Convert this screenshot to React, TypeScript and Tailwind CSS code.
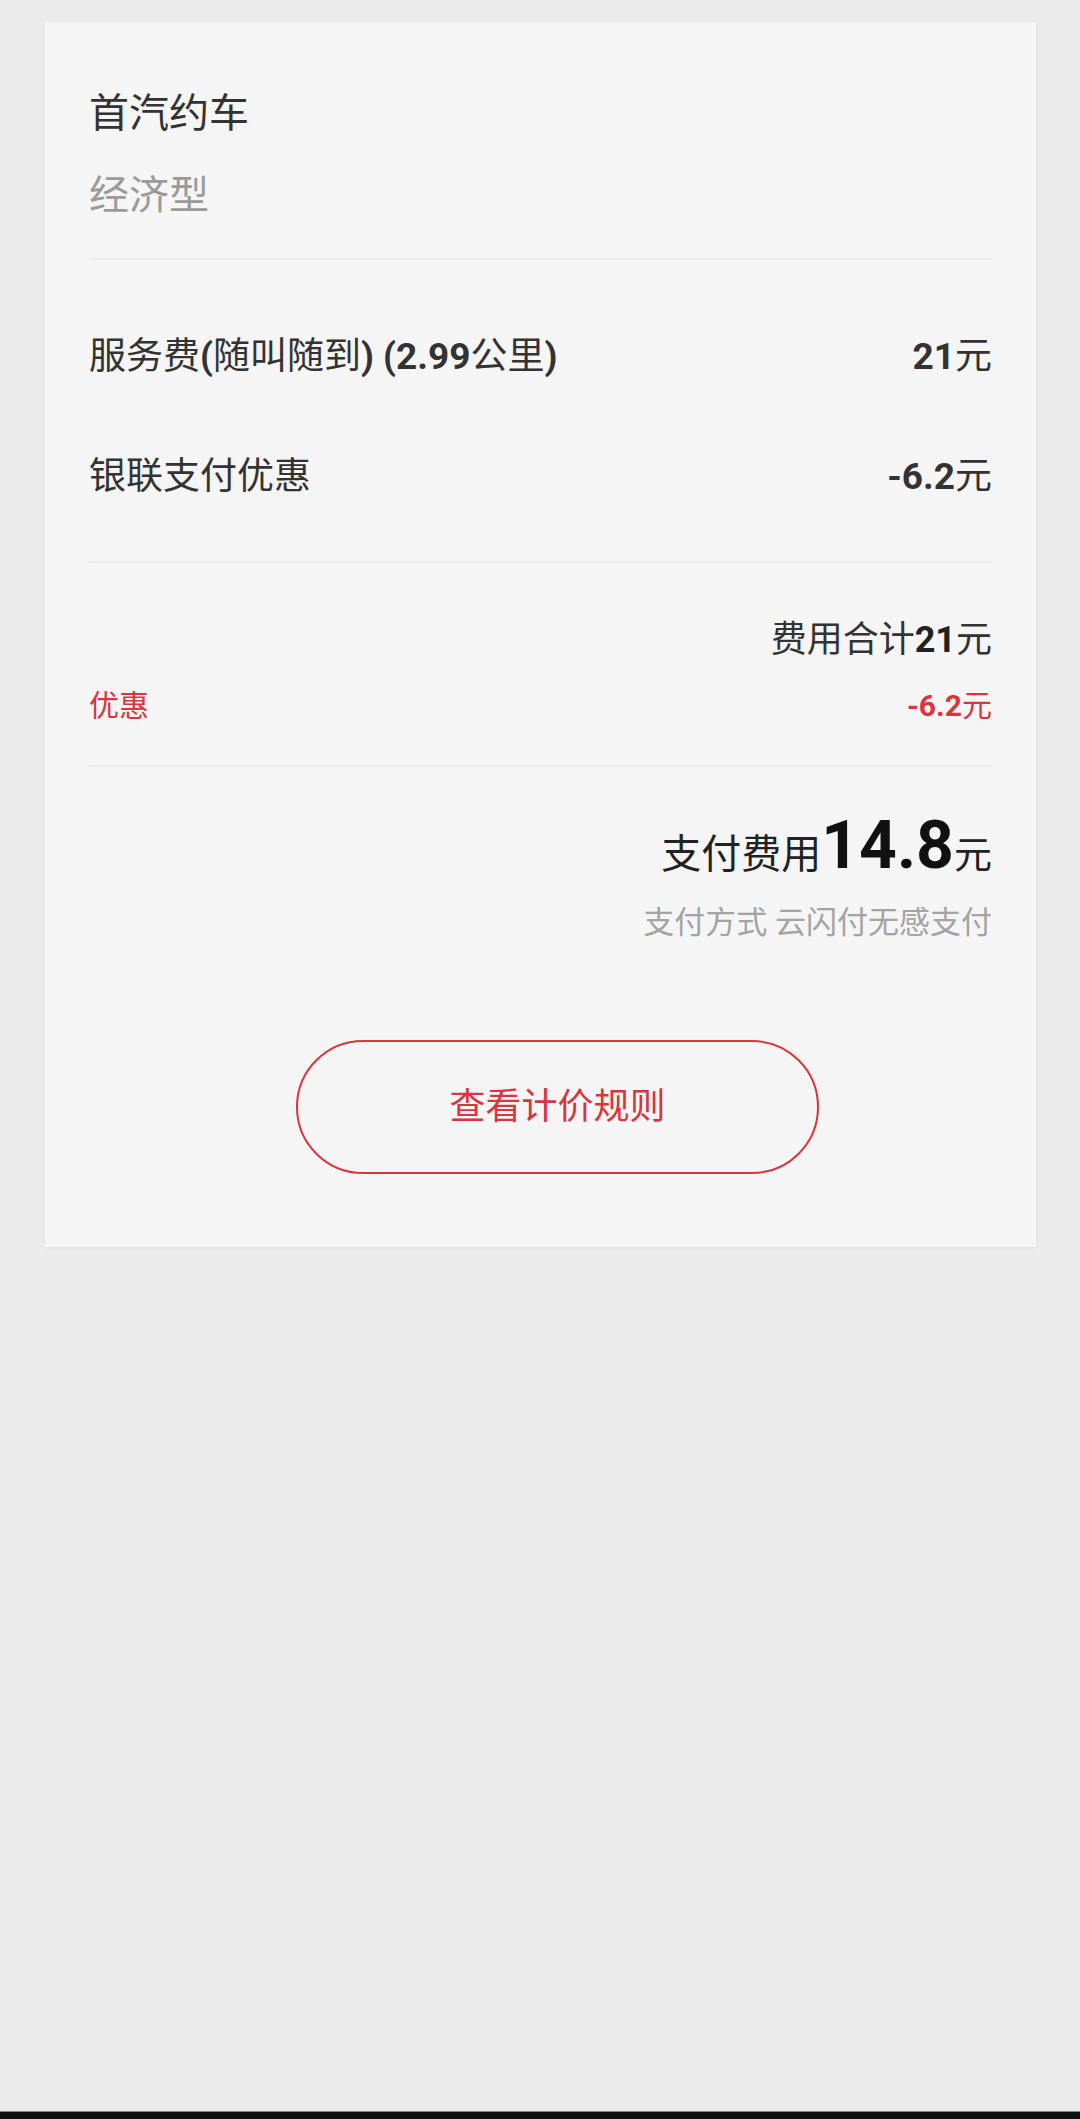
import React from "react";

export default function App() {
  return (
    <div className="min-h-[2119px] flex flex-col bg-[#ebebeb] font-['Roboto','Noto_Sans_CJK_SC',sans-serif]">
      <div className="pt-[22px] pl-[45px]">
        <div className="w-[991px] bg-[#f5f5f5] px-[44px] pt-[64px] pb-[73px] shadow-[0_2px_4px_rgba(0,0,0,0.04)]">
          {/* car info */}
          <div className="h-[56px] flex items-center text-[40px] text-[#333]">首汽约车</div>
          <div className="mt-[26px] h-[56px] flex items-center text-[40px] text-[#9a9a9a]">经济型</div>
          <div className="mt-[34px] h-[2px] bg-[#ebebeb]" />

          {/* fee rows */}
          <div className="mt-[37px] h-[120px] flex items-center justify-between text-[37px] text-[#333]">
            <span>
              服务费<b className="font-bold">(</b>随叫随到<b className="font-bold">) (2.99</b>公里<b className="font-bold">)</b>
            </span>
            <span>
              <b className="font-bold">21</b>元
            </span>
          </div>
          <div className="h-[120px] flex items-center justify-between text-[37px] text-[#333]">
            <span>银联支付优惠</span>
            <span>
              <b className="font-bold">-6.2</b>元
            </span>
          </div>
          <div className="mt-[24px] h-[2px] bg-[#ebebeb]" />

          {/* totals */}
          <div className="mt-[49px] h-[56px] flex items-center justify-end text-[36px] text-[#333]">
            费用合计<b className="font-bold text-[#222]">21</b>元
          </div>
          <div className="mt-[17px] h-[40px] flex items-center justify-between text-[30px] text-[#d8353f]">
            <span>优惠</span>
            <span>
              <b className="font-bold">-6.2</b>元
            </span>
          </div>
          <div className="mt-[40px] h-[2px] bg-[#ebebeb]" />

          {/* pay */}
          <div className="mt-[41px] h-[76px] flex items-baseline justify-end leading-[76px] text-[#222]">
            <span className="text-[40px]">支付费用</span>
            <span className="text-[66px] font-bold text-[#111]">14.8</span>
            <span className="text-[38px]">元</span>
          </div>
          <div className="mt-[19px] h-[40px] flex items-center justify-end text-[31px] text-[#a3a3a3]">
            支付方式 云闪付无感支付
          </div>

          <button className="mt-[97px] ml-[207px] w-[523px] h-[134px] rounded-full border-2 border-[#d8353f] flex items-center justify-center text-[36px] text-[#d8353f]">
            查看计价规则
          </button>
        </div>
      </div>
      <div className="flex-1" />
      <div className="h-[8px] bg-[#111] border-t border-[#888]" />
    </div>
  );
}
